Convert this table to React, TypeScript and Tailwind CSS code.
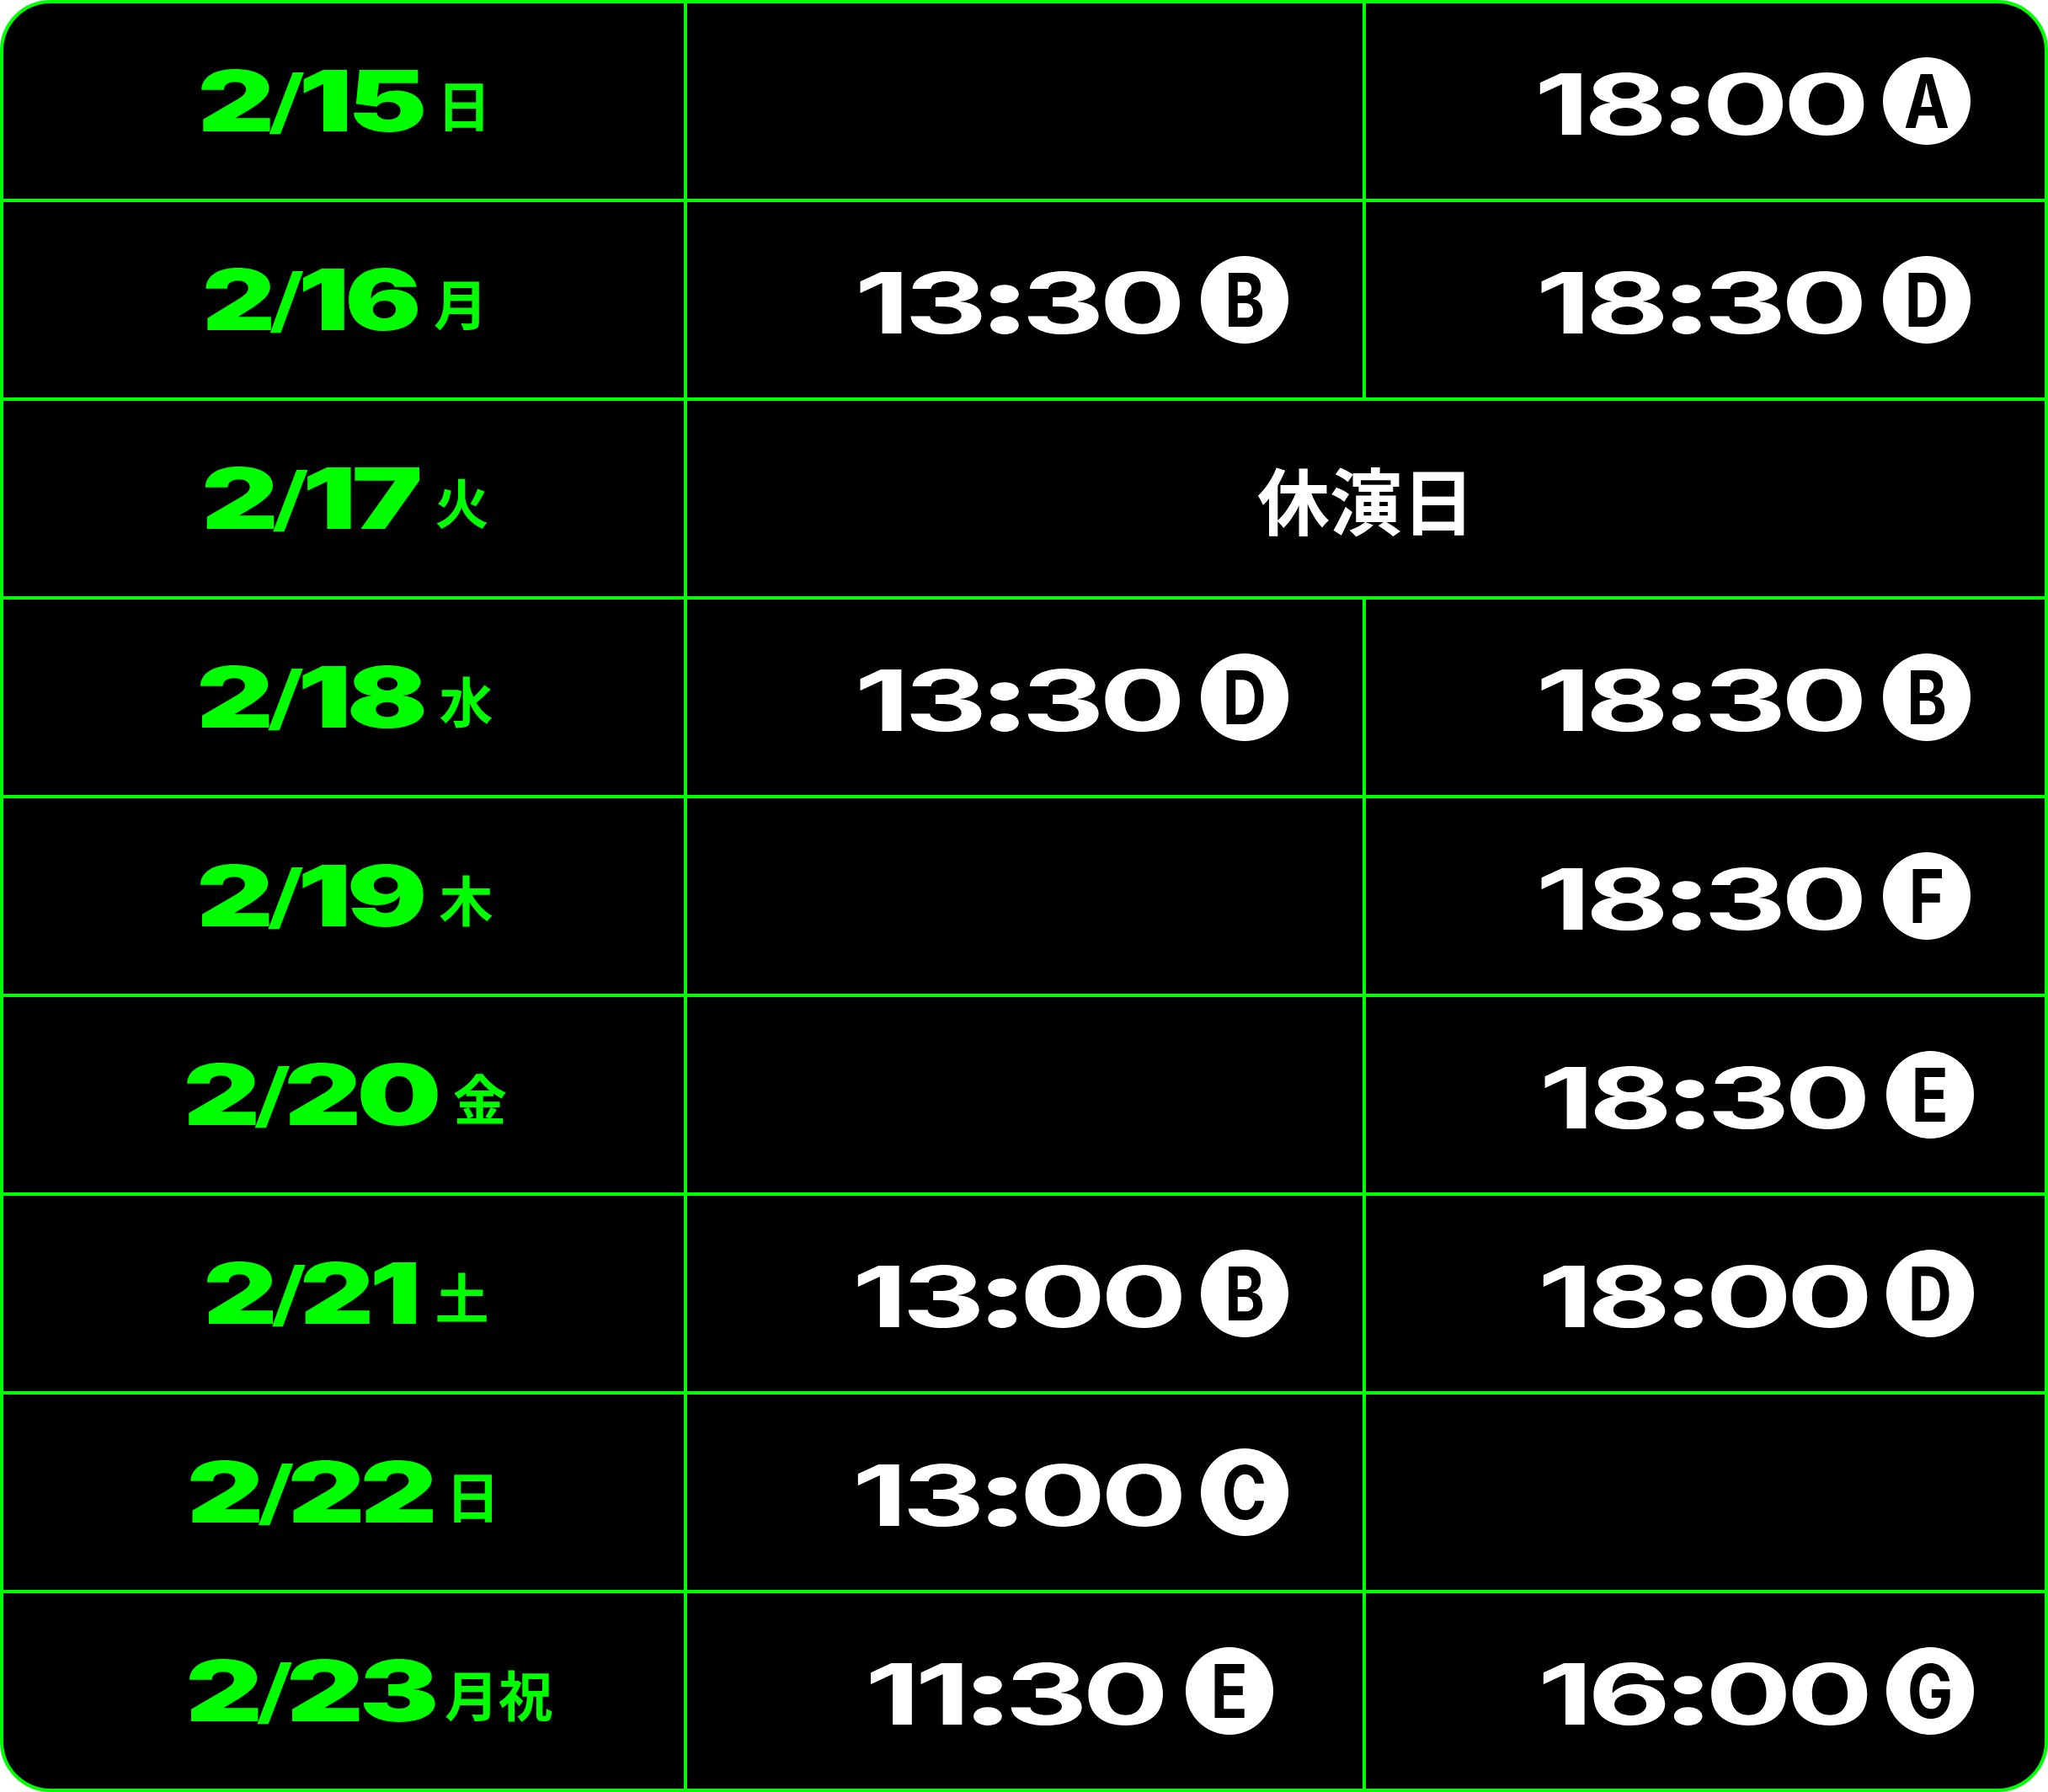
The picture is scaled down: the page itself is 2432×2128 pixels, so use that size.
type Slot = { time: string; mark: string; pr?: string; box?: string } | null;

type Row = {
  date: string;
  dateW: string;
  scale?: string;
  wd: string;
  slots: [Slot, Slot] | "off";
};

const rows: Row[] = [
  { date: "2/15", dateW: "w-[258px]", wd: "日", slots: [null, { time: "18:00", mark: "A" }] },
  { date: "2/16", dateW: "w-[250px]", scale: "scale-x-[1.35]", wd: "月", slots: [{ time: "13:30", mark: "B" }, { time: "18:30", mark: "D" }] },
  { date: "2/17", dateW: "w-[253px]", wd: "火", slots: "off" },
  { date: "2/18", dateW: "w-[263px]", wd: "水", slots: [{ time: "13:30", mark: "D" }, { time: "18:30", mark: "B" }] },
  { date: "2/19", dateW: "w-[263px]", wd: "木", slots: [null, { time: "18:30", mark: "F" }] },
  { date: "2/20", dateW: "w-[296px]", wd: "金", slots: [null, { time: "18:30", mark: "E", pr: "pr-[84px]" }] },
  { date: "2/21", dateW: "w-[253px]", scale: "scale-x-[1.36]", wd: "土", slots: [{ time: "13:00", mark: "B" }, { time: "18:00", mark: "D", pr: "pr-[84px]" }] },
  { date: "2/22", dateW: "w-[279px]", wd: "日", slots: [{ time: "13:00", mark: "C" }, null] },
  { date: "2/23", dateW: "w-[276px]", wd: "月祝", slots: [{ time: "11:30", mark: "E", pr: "pr-[106px]", box: "w-[374px]" }, { time: "16:00", mark: "G", pr: "pr-[84px]" }] },
];

function Mark({ letter }: { letter: string }) {
  return (
    <span className="ml-[16px] flex h-[104px] w-[104px] shrink-0 items-center justify-center rounded-full bg-white text-black">
      <span className="inline-block scale-x-[0.82] font-['Inter',sans-serif] text-[88px] font-bold leading-none">
        {letter}
      </span>
    </span>
  );
}

function TimeCell({ slot }: { slot: Slot }) {
  const [h, m] = slot ? slot.time.split(":") : ["", ""];
  return (
    <div className={`flex items-center justify-end bg-black ${slot?.pr ?? "pr-[88px]"}`}>
      {slot && (
        <>
          <span className={`flex justify-center ${slot.box ?? "w-[404px]"}`}>
            <span className="inline-block scale-x-[1.52] whitespace-nowrap font-['Inter',sans-serif] text-[100px] font-bold leading-none tracking-[-4px] text-white">
              {h}
              <span className="mx-[-3px] text-[110px] font-black">:</span>
              {m}
            </span>
          </span>
          <Mark letter={slot.mark} />
        </>
      )}
    </div>
  );
}

function DateCell({ row }: { row: Row }) {
  const [mo, d] = row.date.split("/");
  return (
    <div className="grid grid-cols-[1fr_auto_1fr] content-center items-baseline bg-black pr-[80px] text-[#00ff00]">
      <span />
      <span className={`flex justify-center ${row.dateW}`}>
        <span
          className={`inline-block whitespace-nowrap font-['Inter',sans-serif] text-[100px] font-black leading-none tracking-[-4px] ${row.scale ?? "scale-x-[1.42]"}`}
        >
          {mo}
          <span className="relative -top-[6px] mx-[-2px] text-[84px] font-semibold">/</span>
          {d}
        </span>
      </span>
      <span className="ml-[22px] -translate-y-[6px] justify-self-start font-['Noto_Sans_CJK_JP',sans-serif] text-[64px] font-bold leading-none">
        {row.wd}
      </span>
    </div>
  );
}

export default function App() {
  return (
    <div className="h-[2128px] w-[2432px] bg-white">
      <div className="grid h-full grid-cols-[808px_802px_806px] grid-rows-[repeat(9,232px)] gap-[4px] overflow-hidden rounded-[60px] border-4 border-[#00ff00] bg-[#00ff00]">
        {rows.map((row) => (
          <div key={row.date} className="contents">
            <DateCell row={row} />
            {row.slots === "off" ? (
              <div className="col-span-2 flex items-center justify-center bg-black font-['Noto_Sans_CJK_JP',sans-serif] text-[86px] font-bold leading-none text-white">
                休演日
              </div>
            ) : (
              <>
                <TimeCell slot={row.slots[0]} />
                <TimeCell slot={row.slots[1]} />
              </>
            )}
          </div>
        ))}
      </div>
    </div>
  );
}
